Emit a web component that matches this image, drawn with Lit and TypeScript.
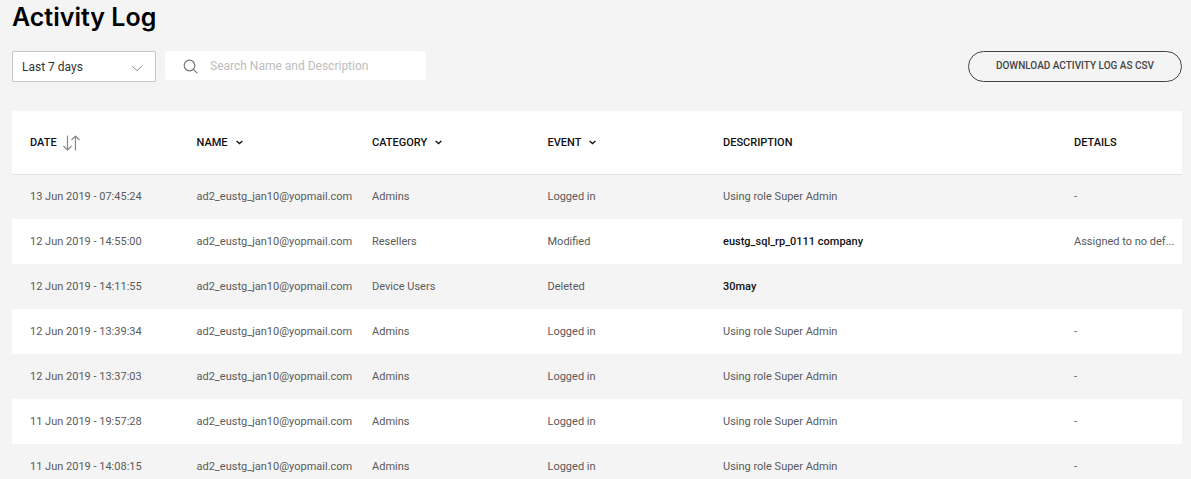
import { LitElement, html, css, nothing } from "lit";
import { customElement, property, state } from "lit/decorators.js";

interface LogEntry {
  date: string;
  category: string;
  event: string;
  description: string;
  strong?: boolean;
  details: string;
}

const USER = "ad2_eustg_jan10@yopmail.com";
const ROLE = "Using role Super Admin";

const ENTRIES: LogEntry[] = [
  { date: "13 Jun 2019 - 07:45:24", category: "Admins", event: "Logged in", description: ROLE, details: "-" },
  { date: "12 Jun 2019 - 14:55:00", category: "Resellers", event: "Modified", description: "eustg_sql_rp_0111 company", strong: true, details: "Assigned to no def..." },
  { date: "12 Jun 2019 - 14:11:55", category: "Device Users", event: "Deleted", description: "30may", strong: true, details: "" },
  { date: "12 Jun 2019 - 13:39:34", category: "Admins", event: "Logged in", description: ROLE, details: "-" },
  { date: "12 Jun 2019 - 13:37:03", category: "Admins", event: "Logged in", description: ROLE, details: "-" },
  { date: "11 Jun 2019 - 19:57:28", category: "Admins", event: "Logged in", description: ROLE, details: "-" },
  { date: "11 Jun 2019 - 14:08:15", category: "Admins", event: "Logged in", description: ROLE, details: "-" },
];

@customElement("log-table")
class LogTable extends LitElement {
  static styles = css`
    :host {
      display: block;
    }
    .table {
      width: 100%;
      table-layout: fixed;
      border-collapse: separate;
      border-spacing: 0;
      background: #fff;
      font-size: 11px;
      line-height: 16px;
      color: #5a5a5a;
    }
    .narrow {
      width: 15%;
    }
    .wide {
      width: 30%;
    }
    .last {
      width: 10%;
    }
    .head {
      height: 63px;
      padding: 0 9px;
      border-bottom: 1px solid #e2e2e2;
      text-align: left;
      font-weight: 500;
      color: #111;
    }
    .cell {
      height: 45px;
      box-sizing: border-box;
      padding: 0 9px;
      white-space: nowrap;
    }
    .row:first-child .cell {
      height: 44px;
    }
    .head:first-child,
    .cell:first-child {
      padding-left: 18px;
    }
    .head:last-child,
    .cell:last-child {
      padding-right: 0;
    }
    .row:nth-child(odd) {
      background: #f4f4f4;
    }
    .strong {
      font-weight: 500;
      color: #111;
    }
    .sort,
    .filter {
      display: inline-flex;
      align-items: center;
      gap: 8px;
      padding: 0;
      border: 0;
      background: none;
      font: inherit;
      color: inherit;
      cursor: pointer;
    }
    .sort {
      gap: 6px;
    }
    .icon {
      display: block;
      fill: none;
      stroke: currentColor;
    }
    .arrows {
      color: #888;
    }
  `;

  @property({ attribute: false }) entries: LogEntry[] = [];

  private filter(label: string) {
    return html`<button class="filter" type="button">
      ${label}
      <svg class="icon" width="7" height="5" viewBox="0 0 7 5" stroke-width="1.3" aria-hidden="true">
        <path d="M0.6 1 3.5 3.6 6.4 1" />
      </svg>
    </button>`;
  }

  render() {
    return html`<table class="table">
      <colgroup>
        <col class="narrow" />
        <col class="narrow" />
        <col class="narrow" />
        <col class="narrow" />
        <col class="wide" />
        <col class="last" />
      </colgroup>
      <thead>
        <tr>
          <th class="head" scope="col">
            <button class="sort" type="button">
              DATE
              <svg class="icon arrows" width="17" height="16" viewBox="0 0 17 16" aria-hidden="true">
                <path d="M4.5 0.5V15M0.5 11 4.5 15 8.5 11M12.5 15.5V1M8.5 5 12.5 1 16.5 5" stroke-width="1.2" />
              </svg>
            </button>
          </th>
          <th class="head" scope="col">${this.filter("NAME")}</th>
          <th class="head" scope="col">${this.filter("CATEGORY")}</th>
          <th class="head" scope="col">${this.filter("EVENT")}</th>
          <th class="head" scope="col">DESCRIPTION</th>
          <th class="head" scope="col">DETAILS</th>
        </tr>
      </thead>
      <tbody>
        ${this.entries.map(
          (e) => html`<tr class="row">
            <td class="cell">${e.date}</td>
            <td class="cell">${USER}</td>
            <td class="cell">${e.category}</td>
            <td class="cell">${e.event}</td>
            <td class="cell">${e.strong ? html`<span class="strong">${e.description}</span>` : e.description}</td>
            <td class="cell">${e.details || nothing}</td>
          </tr>`
        )}
      </tbody>
    </table>`;
  }
}

@customElement("app-root")
class AppRoot extends LitElement {
  static styles = css`
    :host {
      display: block;
      min-height: 100vh;
      box-sizing: border-box;
      padding: 0 9px 0 12px;
      background: #f4f4f4;
      font-family: Roboto, "Noto Sans", sans-serif;
      font-size: 12px;
    }
    .title {
      margin: 0;
      padding: 1px 0 18px;
      font-family: Inter, sans-serif;
      font-size: 25px;
      line-height: 32px;
      font-weight: 600;
      color: #000;
    }
    .toolbar {
      display: flex;
      align-items: flex-start;
      gap: 9px;
      margin-bottom: 29px;
    }
    .period {
      display: grid;
      width: 144px;
    }
    .select,
    .chevron {
      grid-area: 1 / 1;
    }
    .select {
      appearance: none;
      height: 31px;
      padding: 0 32px 0 9px;
      border: 1px solid #c6c6c6;
      border-radius: 1px;
      background: #fff;
      font: inherit;
      color: #333;
    }
    .chevron {
      align-self: center;
      justify-self: end;
      margin: 4px 13px 0 0;
      fill: none;
      stroke: #888;
      pointer-events: none;
    }
    .search {
      display: flex;
      align-items: center;
      gap: 12px;
      box-sizing: border-box;
      width: 261px;
      height: 29px;
      padding: 0 18px;
      border-radius: 3px;
      background: #fff;
    }
    .glass {
      flex: none;
      margin-top: 2px;
      fill: none;
      stroke: #777;
    }
    .input {
      flex: 1;
      min-width: 0;
      padding: 0;
      border: 0;
      outline: 0;
      background: none;
      font: inherit;
      color: #333;
    }
    .input::placeholder {
      color: #bdbdbd;
      opacity: 1;
    }
    .download {
      height: 31px;
      width: 214px;
      margin-left: auto;
      padding: 0 0 3px;
      border: 1px solid #444;
      border-radius: 16px;
      background: none;
      font: 500 10px Roboto, sans-serif;
      color: #444;
      white-space: nowrap;
      cursor: pointer;
    }
  `;

  @state() private entries = ENTRIES;

  render() {
    return html`
      <h1 class="title">Activity Log</h1>
      <div class="toolbar">
        <div class="period">
          <select class="select" aria-label="Period">
            <option>Last 7 days</option>
          </select>
          <svg class="chevron" width="12" height="7" viewBox="0 0 12 7" aria-hidden="true">
            <path d="M1 0.8 6 5.8 11 0.8" />
          </svg>
        </div>
        <label class="search">
          <svg class="glass" width="15" height="15" viewBox="0 0 15 15" stroke-width="1.2" aria-hidden="true">
            <circle cx="6.5" cy="6.5" r="5.3" />
            <path d="M10.3 10.3 14.2 14.2" />
          </svg>
          <input class="input" type="search" placeholder="Search Name and Description" aria-label="Search Name and Description" />
        </label>
        <button class="download" type="button">DOWNLOAD ACTIVITY LOG AS CSV</button>
      </div>
      <log-table .entries=${this.entries}></log-table>
    `;
  }
}
